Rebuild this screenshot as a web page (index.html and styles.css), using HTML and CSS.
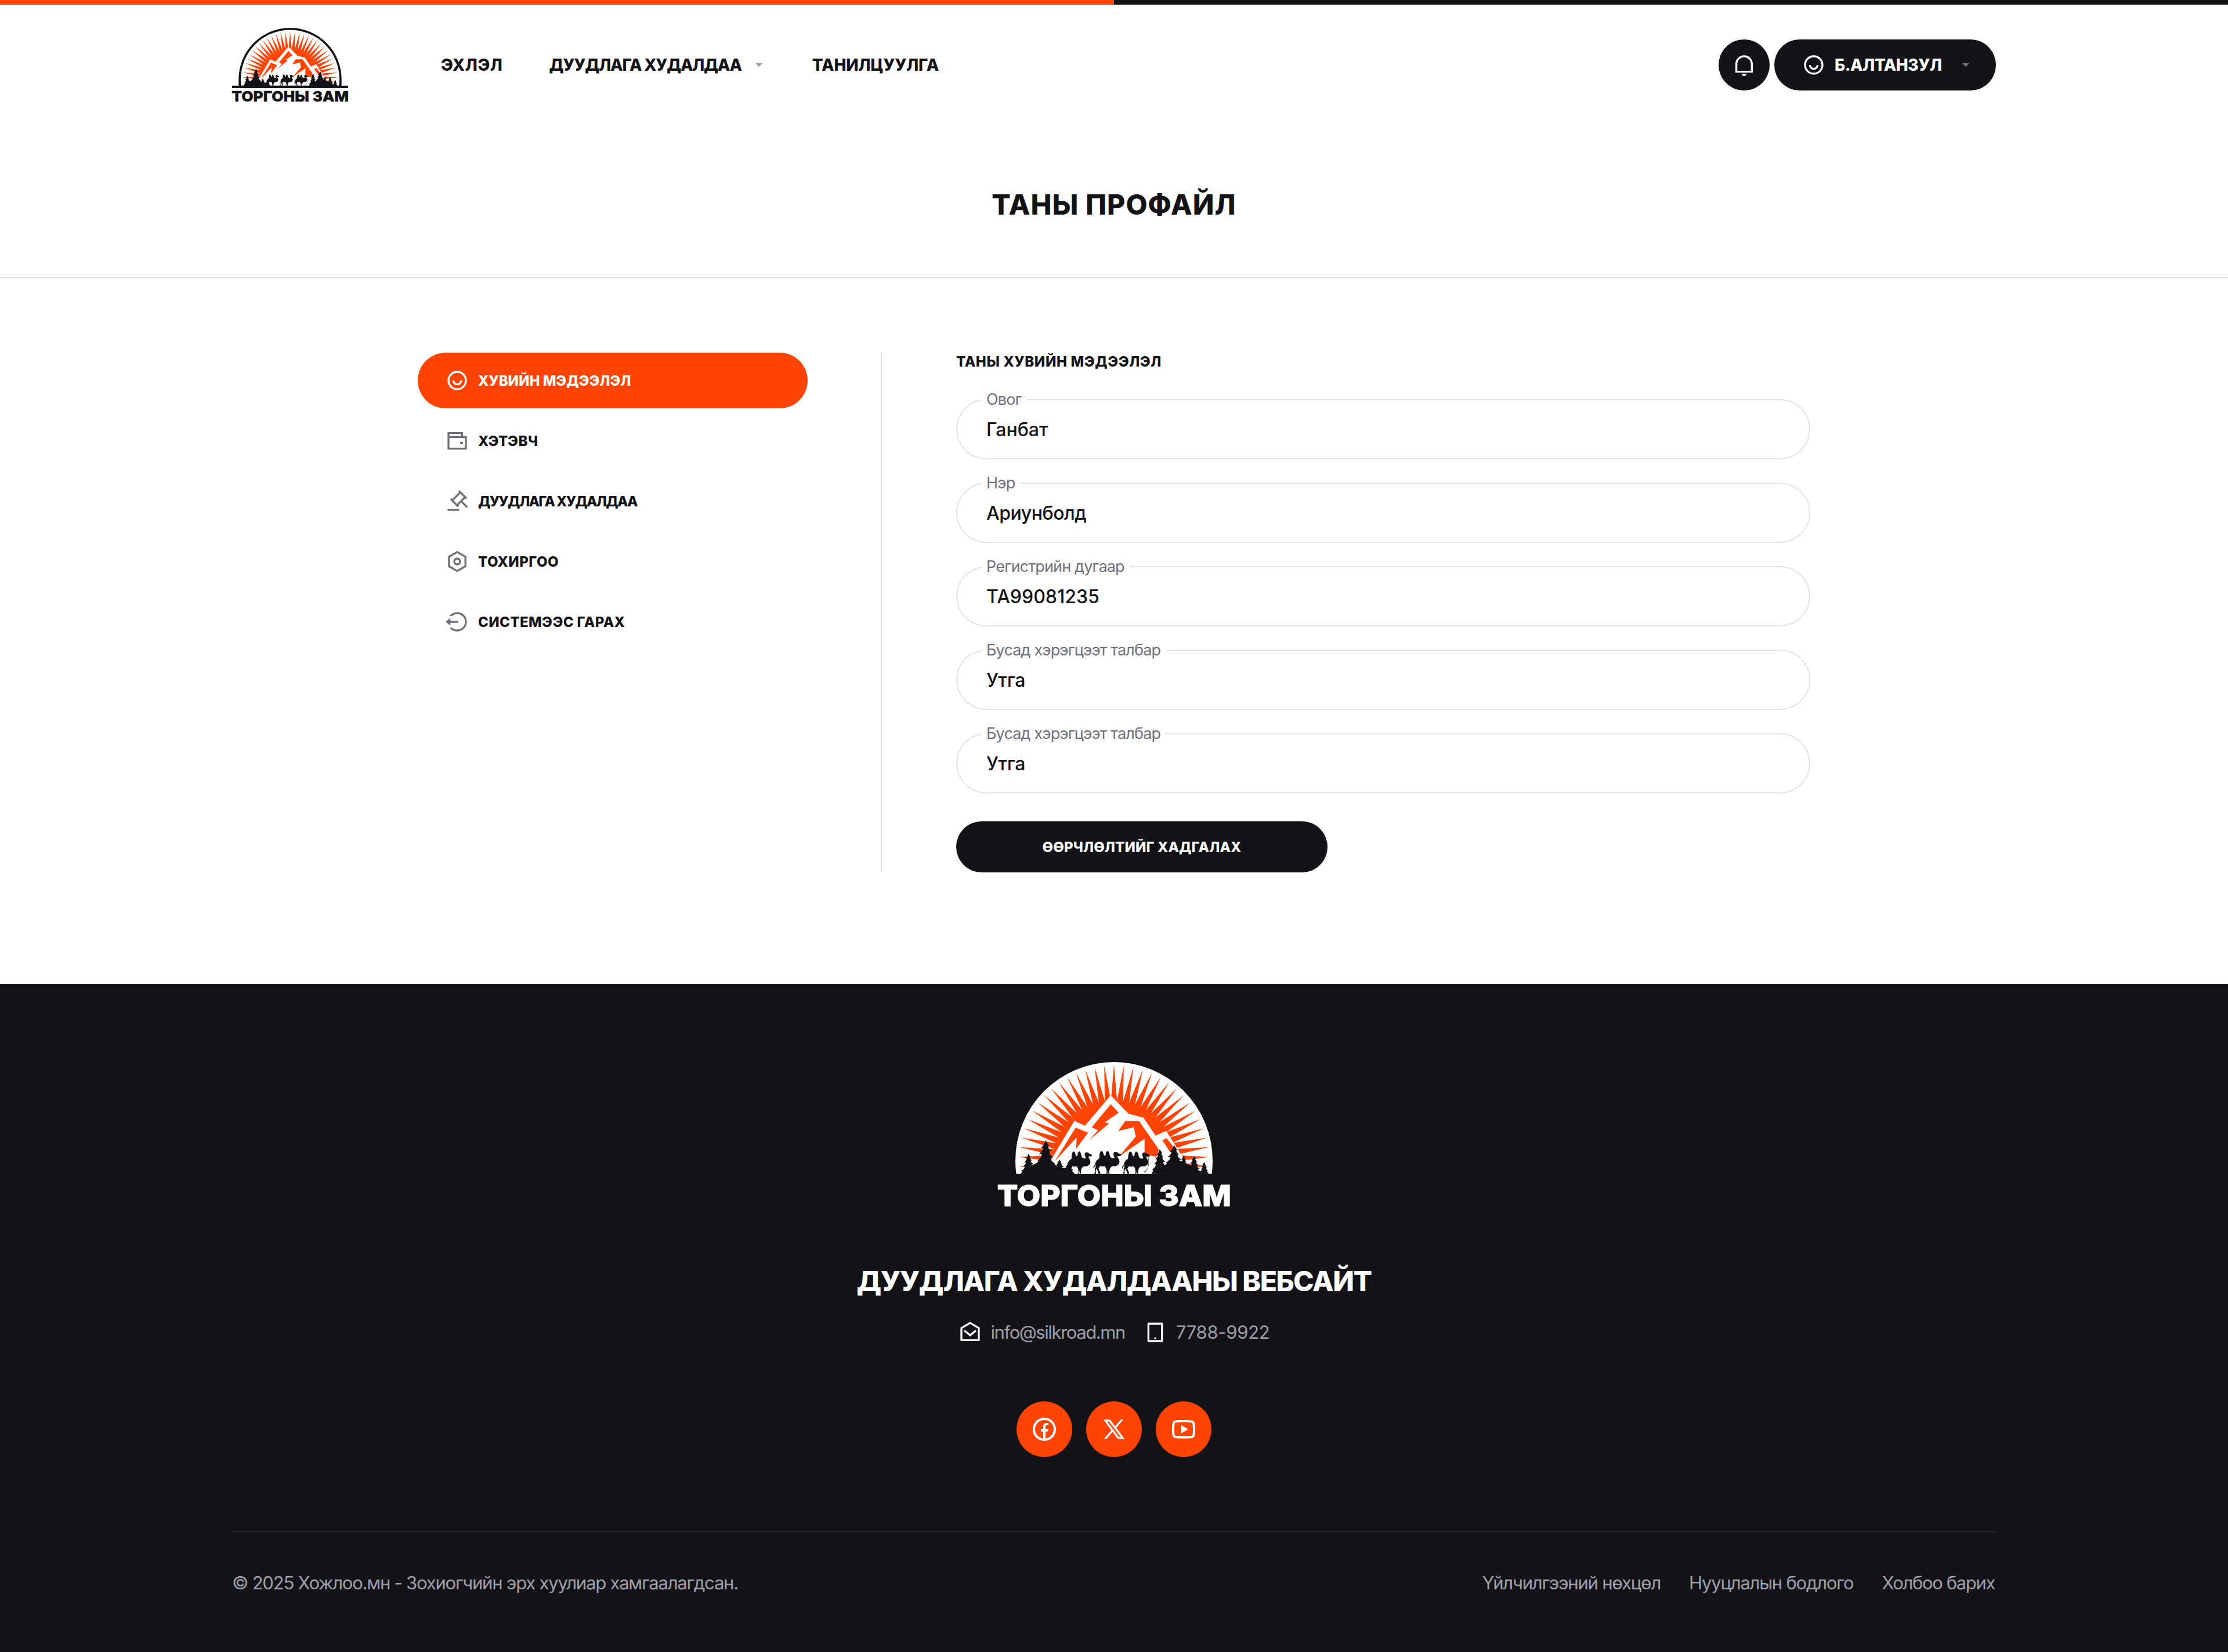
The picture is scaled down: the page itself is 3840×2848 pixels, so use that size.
FILE: index.html
```
<!DOCTYPE html>
<html lang="mn">
<head>
<meta charset="utf-8">
<title>Таны профайл</title>
<link rel="stylesheet" href="styles.css">
</head>
<body>

<svg class="defs" width="0" height="0" aria-hidden="true">
  <defs>
    <!-- sun rays, built by doubling one spike around the centre of the dome -->
    <path id="ray" d="M720 108 L736.500 299 L703.500 299 Z"/>
    <g id="ray2"><use href="#ray"/><use href="#ray" transform="rotate(5.85 720 603)"/></g>
    <g id="ray4"><use href="#ray2"/><use href="#ray2" transform="rotate(11.7 720 603)"/></g>
    <g id="ray8"><use href="#ray4"/><use href="#ray4" transform="rotate(23.4 720 603)"/></g>
    <g id="ray16"><use href="#ray8"/><use href="#ray8" transform="rotate(46.8 720 603)"/></g>
    <g id="rays">
      <use href="#ray16" transform="rotate(-93.6 720 603)"/>
      <use href="#ray16"/>
      <use href="#ray" transform="rotate(93.6 720 603)"/>
    </g>
    <clipPath id="ground"><path d="M120 60H1320V671H120Z"/></clipPath>
    <path id="tree" d="M0 0 L10 20 L17 27 L10 29 L16 46 L27 56 L17 57 L22 74 L38 88 L24 90 L28 106 L48 124 L32 126 L40 146 L60 175 L-60 175 L-42 150 L-56 150 L-34 128 L-28 108 L-42 108 L-24 88 L-19 72 L-34 74 L-16 52 L-14 40 L-22 40 L-10 24 Z"/>
    <path id="camel" d="M2 92 L0 82 L10 70 C10 56 18 46 31 38 C31 22 33 8 38 2 C44 -2 50 2 52 12 C53 22 58 28 64 22 C64 8 68 1 74 0 C82 2 84 18 88 31 C96 38 108 40 110 34 C106 24 100 16 107 7 C114 2 122 4 129 11 L145 18 L141 26 L124 27 C126 38 138 46 135 60 C130 76 114 82 104 77 C96 80 88 84 86 92 L82 106 L84 118 L78 118 L76 100 L73 118 L65 118 L70 110 L66 88 L58 78 C50 82 42 80 36 77 L27 90 L31 102 L38 118 L28 118 L20 96 L15 92 L12 106 L14 118 L5 118 L8 108 L8 92 L13 82 L13 74 L6 82 Z"/>
    <g id="emblem">
      <g clip-path="url(#ground)">
        <circle cx="720" cy="603" r="510" fill="#fff"/>
        <g fill="#ff4405">
          <circle cx="720" cy="603" r="306"/>
          <use href="#rays"/>
        </g>
        <path fill="#fff" d="M340 690 L515 397 L570 422 L703 265 L795 360 L872 380 L935 473 L990 449 L1110 640 L1130 690 Z"/>
        <g fill="#ff4405">
          <path d="M413 607 L522 432 L586 458 L524 542 L527 483 Z"/>
          <path d="M703 311 L745 355 L672 405 L695 410 L590 498 L637 446 L605 430 Z"/>
          <path d="M778 398 H850 L952 545 L940 583 L878 571 V490 L745 582 L833 478 L822 430 L741 450 Z"/>
          <path d="M970 498 L992 487 L1030 535 L1012 560 Z"/>
        </g>
      </g>
      <g fill="#131217">
        <path d="M240 671 C250 640 285 625 310 622 L345 595 H390 L430 640 L470 640 L518 671 Z"/>
        <path d="M918 671 L925 640 L985 625 L1010 600 H1055 L1110 625 L1160 655 L1204 671 Z"/>
        <use href="#tree" transform="translate(278 568) scale(.68 .6)"/>
        <use href="#tree" transform="translate(367 497) scale(1.05 1)"/>
        <use href="#tree" transform="translate(438 598) scale(.6 .42)"/>
        <use href="#tree" transform="translate(487 605) scale(.5 .38)"/>
        <use href="#tree" transform="translate(957 543) scale(.72 .73)"/>
        <use href="#tree" transform="translate(1031 523) scale(1 .85)"/>
        <use href="#tree" transform="translate(1080 576) scale(.55 .55)"/>
        <use href="#tree" transform="translate(1134 579) scale(.6 .53)"/>
        <use href="#tree" transform="translate(1186 610) scale(.42 .35)"/>
        <use href="#camel" transform="translate(472 555) scale(.93 .98)"/>
        <use href="#camel" transform="translate(613 553)"/>
        <use href="#camel" transform="translate(762 556) scale(1 .97)"/>
        <path fill="none" stroke="#131217" stroke-width="2" d="M897 576 C900 610 904 640 880 664 C872 660 878 650 888 656"/>
      </g>
    </g>
  </defs>
</svg>

<div class="top-stripe"></div>

<header class="header">
  <svg class="header-logo" viewBox="120 72 1200 768" role="img" aria-label="Торгоны зам">
    <path fill="#131217" d="M188 680 V603 A532 531 0 0 1 1252 603 V680 Z"/>
    <use href="#emblem"/>
    <path fill="#131217" d="M120 670H1320V696H120Z"/>
    <text class="wordmark wordmark-dark" x="116" y="836" textLength="1210" lengthAdjust="spacingAndGlyphs">ТОРГОНЫ ЗАМ</text>
  </svg>
  <nav class="nav">
    <a class="nav-link ls-home">ЭХЛЭЛ</a>
    <a class="nav-link ls-auction">ДУУДЛАГА ХУДАЛДАА
      <svg class="caret" viewBox="0 0 24 24"><path d="M12 14l-4-4h8z"/></svg>
    </a>
    <a class="nav-link ls-about">ТАНИЛЦУУЛГА</a>
  </nav>
  <div class="account">
    <button class="bell" aria-label="Мэдэгдэл">
      <svg class="icon" viewBox="0 0 24 24"><path d="M5 18H19V11.031C19 7.148 15.866 4 12 4S5 7.148 5 11.031V18ZM12 2C16.971 2 21 6.043 21 11.031V20H3V11.031C3 6.043 7.029 2 12 2ZM9.500 21H14.500C14.500 22.381 13.381 23.500 12 23.500S9.500 22.381 9.500 21Z"/></svg>
    </button>
    <button class="user">
      <svg class="icon" viewBox="0 0 24 24"><path d="M12 22C6.477 22 2 17.523 2 12S6.477 2 12 2s10 4.477 10 10-4.477 10-10 10zm0-2a8 8 0 1 0 0-16 8 8 0 0 0 0 16zm-5-8h2a3 3 0 0 0 6 0h2a5 5 0 0 1-10 0z"/></svg>
      <span>Б.АЛТАНЗУЛ</span>
      <svg class="caret caret-user" viewBox="0 0 24 24"><path d="M12 14l-4-4h8z"/></svg>
    </button>
  </div>
</header>

<section class="title-bar"><h1 class="title">ТАНЫ ПРОФАЙЛ</h1></section>

<main class="main">
  <aside class="side">
    <a class="side-link side-link-active ls-personal">
      <svg class="icon" viewBox="0 0 24 24"><path d="M12 22C6.477 22 2 17.523 2 12S6.477 2 12 2s10 4.477 10 10-4.477 10-10 10zm0-2a8 8 0 1 0 0-16 8 8 0 0 0 0 16zm-5-8h2a3 3 0 0 0 6 0h2a5 5 0 0 1-10 0z"/></svg>
      ХУВИЙН МЭДЭЭЛЭЛ
    </a>
    <a class="side-link ls-wallet">
      <svg class="icon" viewBox="0 0 24 24"><path d="M18 7h4v14H2V3h16v4zM4 9v10h16V9H4zm0-4v2h12V5H4zm11 8h3v2h-3v-2z"/></svg>
      ХЭТЭВЧ
    </a>
    <a class="side-link ls-side-auction">
      <svg class="icon" viewBox="0 0 24 24"><path d="M14 20v2H2v-2h12zM14.586.686l7.778 7.778L20.950 9.880l-1.060-.354L17.413 12l5.657 5.657-1.414 1.414L16 13.414l-2.404 2.404.283 1.132-1.415 1.414-7.778-7.778 1.415-1.414 1.130.282 6.294-6.293-.353-1.060L14.586.686zm.707 3.536l-7.071 7.070 3.535 3.536 7.071-7.070-3.535-3.536z"/></svg>
      ДУУДЛАГА ХУДАЛДАА
    </a>
    <a class="side-link ls-settings">
      <svg class="icon" viewBox="0 0 24 24"><path d="M12 1l9.500 5.500v11L12 23l-9.500-5.500v-11L12 1zm0 2.311L4.500 7.653v8.694l7.500 4.342 7.500-4.342V7.653L12 3.311zM12 16a4 4 0 1 1 0-8 4 4 0 0 1 0 8zm0-2a2 2 0 1 0 0-4 2 2 0 0 0 0 4z"/></svg>
      ТОХИРГОО
    </a>
    <a class="side-link ls-logout">
      <svg class="icon" viewBox="0 0 24 24"><path d="M5 11h8v2H5v3l-5-4 5-4v3zm-1 7h2.708a8 8 0 1 0 0-12H4A9.985 9.985 0 0 1 12 2c5.523 0 10 4.477 10 10s-4.477 10-10 10a9.985 9.985 0 0 1-8-4z"/></svg>
      СИСТЕМЭЭС ГАРАХ
    </a>
  </aside>

  <form class="form">
    <h2 class="form-title">ТАНЫ ХУВИЙН МЭДЭЭЛЭЛ</h2>
    <div class="fields">
      <div class="field"><span class="label">Овог</span><span class="value">Ганбат</span></div>
      <div class="field"><span class="label">Нэр</span><span class="value value-tight">Ариунболд</span></div>
      <div class="field"><span class="label">Регистрийн дугаар</span><span class="value">ТА99081235</span></div>
      <div class="field"><span class="label">Бусад хэрэгцээт талбар</span><span class="value value-tight">Утга</span></div>
      <div class="field"><span class="label">Бусад хэрэгцээт талбар</span><span class="value value-tight">Утга</span></div>
    </div>
    <button class="save" type="button">ӨӨРЧЛӨЛТИЙГ ХАДГАЛАХ</button>
  </form>
</main>

<footer class="footer">
  <svg class="footer-logo" viewBox="120 72 1200 768" role="img" aria-label="Торгоны зам">
    <use href="#emblem"/>
    <text class="wordmark wordmark-light" x="116" y="836" textLength="1210" lengthAdjust="spacingAndGlyphs">ТОРГОНЫ ЗАМ</text>
  </svg>
  <h2 class="footer-title">ДУУДЛАГА ХУДАЛДААНЫ ВЕБСАЙТ</h2>
  <div class="contacts">
    <span class="contact ls-mail">
      <svg class="icon" viewBox="0 0 24 24"><path d="M2.243 6.854L11.490 1.310a1 1 0 0 1 1.029 0l9.238 5.545a.5.5 0 0 1 .243.429V20a1 1 0 0 1-1 1H3a1 1 0 0 1-1-1V7.283a.5.5 0 0 1 .243-.429zM4 8.133V19h16V8.132l-7.996-4.800L4 8.132zm8.060 5.565l5.296-4.463 1.288 1.530-6.570 5.537-6.710-5.530 1.272-1.544 5.424 4.470z"/></svg>
      <span class="contact-text">info@silkroad.mn</span>
    </span>
    <span class="contact ls-phone">
      <svg class="icon" viewBox="0 0 24 24"><path d="M6 4v16h12V4H6zM5 2h14a1 1 0 0 1 1 1v18a1 1 0 0 1-1 1H5a1 1 0 0 1-1-1V3a1 1 0 0 1 1-1zm7 15a1 1 0 1 1 0 2 1 1 0 0 1 0-2z"/></svg>
      <span class="contact-text">7788-9922</span>
    </span>
  </div>
  <div class="socials">
    <a class="social" aria-label="Facebook"><svg class="icon-large" viewBox="0 0 24 24"><path d="M13 19.938A8.001 8.001 0 0 0 12 4a8 8 0 0 0-1 15.938V14H9v-2h2v-1.654c0-1.337.14-1.822.4-2.311A2.726 2.726 0 0 1 12.536 6.900c.382-.205.857-.328 1.687-.381.329-.021.755.005 1.278.08v1.900H15c-.917 0-1.296.043-1.522.164a.727.727 0 0 0-.314.314c-.12.226-.164.45-.164 1.368V12h2.500l-.5 2h-2v5.938zM12 22C6.477 22 2 17.523 2 12S6.477 2 12 2s10 4.477 10 10-4.477 10-10 10z"/></svg></a>
    <a class="social" aria-label="X"><svg class="icon" viewBox="0 0 24 24"><path d="M8 2H1L9.261 13.015L1.450 22H4.100L10.488 14.651L16 22H23L14.392 10.522L21.800 2H19.150L13.164 8.886L8 2ZM17 20L5 4H7L19 20H17Z"/></svg></a>
    <a class="social" aria-label="YouTube"><svg class="icon-large" viewBox="0 0 24 24"><path d="M19.606 6.995c-.076-.298-.292-.523-.539-.592C18.630 6.280 16.500 6 12 6s-6.628.28-7.069.403c-.244.068-.46.293-.537.592C4.285 7.419 4 9.196 4 12s.285 4.580.394 5.006c.076.297.292.522.538.59C5.372 17.720 7.500 18 12 18s6.629-.28 7.069-.403c.244-.068.46-.293.537-.592C19.715 16.581 20 14.800 20 12s-.285-4.580-.394-5.005zm1.937-.497C22 8.280 22 12 22 12s0 3.720-.457 5.502c-.254.985-.997 1.760-1.938 2.022C17.896 20 12 20 12 20s-5.893 0-7.605-.476c-.945-.266-1.687-1.040-1.938-2.022C2 15.720 2 12 2 12s0-3.720.457-5.502c.254-.985.997-1.760 1.938-2.022C6.107 4 12 4 12 4s5.896 0 7.605.476c.945.266 1.687 1.040 1.938 2.022zM10 15.500v-7l6 3.500-6 3.500z"/></svg></a>
  </div>
  <div class="legal">
    <span>© 2025 Хожлоо.мн - Зохиогчийн эрх хуулиар хамгаалагдсан.</span>
    <nav class="legal-links">
      <a>Үйлчилгээний нөхцөл</a>
      <a>Нууцлалын бодлого</a>
      <a class="ls-contact">Холбоо барих</a>
    </nav>
  </div>
</footer>

</body>
</html>
```
FILE: styles.css
```
* { box-sizing: border-box; }

body {
  margin: 0;
  background: #fff;
  color: #131217;
  font-family: Inter, "Liberation Sans", sans-serif;
}

h1, h2 { margin: 0; }
svg { display: block; flex: none; }
button { border: 0; padding: 0; font: inherit; color: inherit; }
.defs { position: absolute; }

.icon { width: 40px; height: 40px; fill: currentColor; }
.icon-large { width: 48px; height: 48px; fill: currentColor; }
.caret { width: 40px; height: 40px; fill: #a0a0ab; }

/* Header */
.top-stripe {
  height: 8px;
  background: linear-gradient(90deg, #ff4405 50%, #131217 50%);
}
.header {
  height: 208px;
  padding: 0 400px;
  display: flex;
  align-items: center;
}
.header-logo { width: 200px; height: 128px; overflow: visible; }
.wordmark { font-weight: 800; font-size: 150px; }
.wordmark-dark { fill: #131217; stroke: #131217; stroke-width: 4px; }
.wordmark-light { fill: #fff; stroke: #fff; stroke-width: 4px; }
.nav {
  margin-left: 160px;
  display: flex;
  font-size: 28px;
  font-weight: 800;
}
.nav-link { display: flex; align-items: center; white-space: nowrap; }
.ls-home { letter-spacing: .023em; margin-right: 80px; }
.ls-auction { letter-spacing: -.0435em; gap: 10px; margin-right: 72px; }
.ls-about { letter-spacing: -.006em; }
.account { margin-left: auto; display: flex; gap: 8px; color: #fff; }
.bell {
  width: 88px;
  height: 88px;
  border-radius: 50%;
  background: #131217;
  display: grid;
  place-items: center;
}
.user {
  width: 382px;
  height: 88px;
  border-radius: 44px;
  padding: 0 32px 0 48px;
  background: #131217;
  display: flex;
  align-items: center;
  gap: 16px;
  font-size: 28px;
  font-weight: 800;
  letter-spacing: -.0165em;
}
.caret-user { margin-left: auto; fill: #70707b; }

/* Page title */
.title-bar {
  height: 264px;
  padding-top: 105px;
  border-bottom: 2px solid #e4e4e7;
  text-align: center;
}
.title { font-size: 48px; line-height: 64px; font-weight: 800; letter-spacing: .0225em; }

/* Profile */
.main { padding: 128px 720px 192px; display: flex; }
.side {
  width: 800px;
  padding-right: 126px;
  border-right: 2px solid #e4e4e7;
  display: flex;
  flex-direction: column;
  gap: 8px;
}
.side-link {
  height: 96px;
  padding-left: 48px;
  border-radius: 48px;
  display: flex;
  align-items: center;
  gap: 16px;
  font-size: 24px;
  font-weight: 800;
}
.side-link .icon { color: #70707b; }
.side-link-active { background: #ff4405; color: #fff; }
.side-link-active .icon { color: #fff; }
.ls-personal { letter-spacing: .001em; }
.ls-wallet { letter-spacing: .0235em; }
.ls-side-auction { letter-spacing: -.068em; }
.ls-settings { letter-spacing: .0205em; }
.ls-logout { letter-spacing: .0175em; }

.form { width: 1600px; padding-left: 128px; }
.form-title { font-size: 24px; line-height: 32px; font-weight: 800; letter-spacing: .027em; }
.fields { margin-top: 48px; display: flex; flex-direction: column; gap: 40px; }
.field {
  position: relative;
  height: 104px;
  padding: 2px 50px 0;
  border: 2px solid #e4e4e7;
  border-radius: 52px;
  display: flex;
  align-items: center;
}
.label {
  position: absolute;
  left: 42px;
  top: -18px;
  padding: 0 9px 0 8px;
  background: #fff;
  color: #70707b;
  font-size: 27px;
  line-height: 34px;
  letter-spacing: -.0315em;
}
.value { font-size: 32px; font-weight: 500; line-height: 40px; }
.value-tight { letter-spacing: -.0145em; }
.save {
  margin-top: 48px;
  width: 640px;
  height: 88px;
  border-radius: 44px;
  background: #131217;
  color: #fff;
  font-size: 24px;
  font-weight: 800;
  letter-spacing: .0066em;
}

/* Footer */
.footer {
  height: 1152px;
  padding: 128px 400px 0;
  background: #131217;
  color: #a0a0ab;
  display: flex;
  flex-direction: column;
  align-items: center;
}
.footer-logo { width: 400px; height: 256px; overflow: visible; }
.footer-title {
  margin-top: 97px;
  color: #fff;
  font-size: 48px;
  line-height: 64px;
  font-weight: 800;
  letter-spacing: -.031em;
}
.contacts { margin-top: 35px; display: flex; gap: 32px; font-size: 31px; line-height: 40px; }
.contact { display: flex; align-items: center; gap: 16px; }
.contact .icon { color: #fff; }
.contact-text { padding-top: 1px; }
.ls-mail { letter-spacing: -.046em; }
.ls-phone { letter-spacing: -.009em; }
.socials { margin-top: 99px; display: flex; gap: 24px; }
.social {
  width: 96px;
  height: 96px;
  border-radius: 50%;
  background: #ff4405;
  color: #fff;
  display: grid;
  place-items: center;
}
.legal {
  align-self: stretch;
  margin-top: 128px;
  padding: 65px 2px 0 0;
  border-top: 2px solid #26272b;
  display: flex;
  justify-content: space-between;
  font-size: 31px;
  line-height: 44px;
  letter-spacing: -.039em;
}
.legal-links { display: flex; gap: 49px; }
.ls-contact { letter-spacing: -.044em; }
```
